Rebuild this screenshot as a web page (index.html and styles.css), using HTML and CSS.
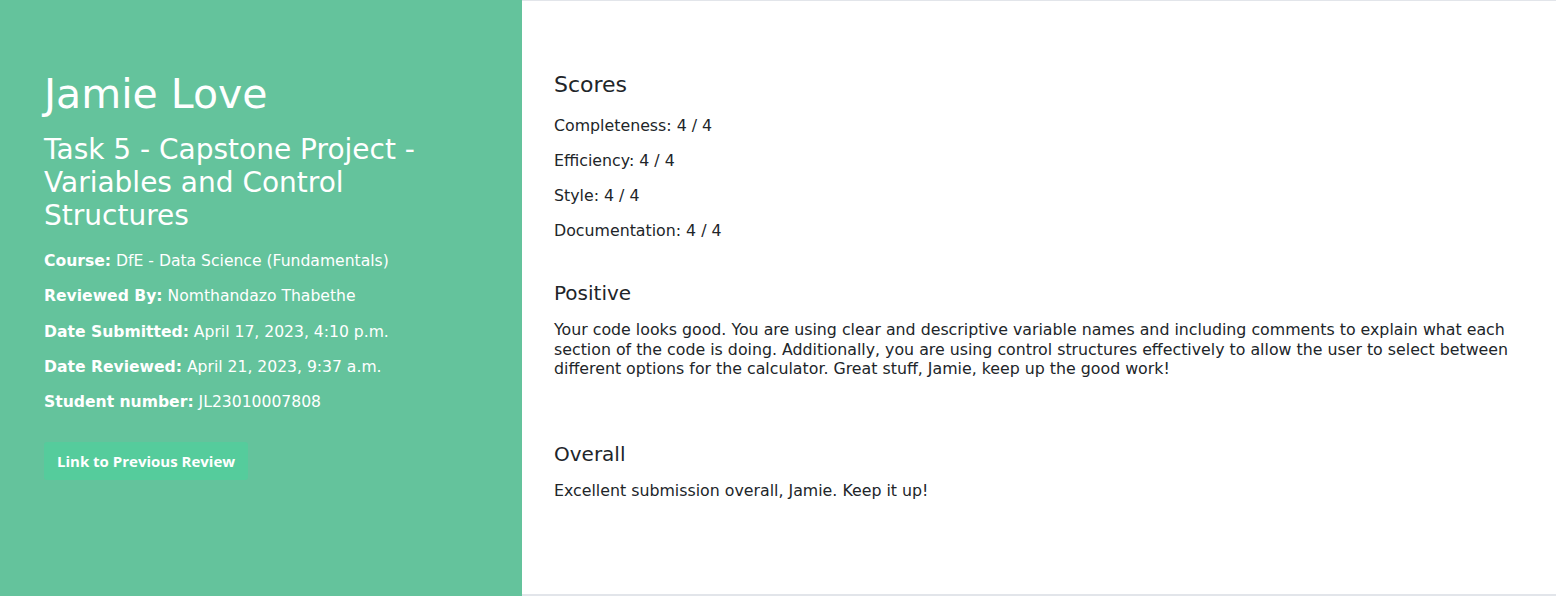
FILE: index.html
```html
<!DOCTYPE html>
<html lang="en">
<head>
<meta charset="utf-8">
<title>Review - Jamie Love</title>
<link rel="stylesheet" href="styles.css">
</head>
<body>
<div class="page">
  <aside class="side">
    <h1 class="name">Jamie Love</h1>
    <h2 class="task">Task 5 - Capstone Project - Variables and Control Structures</h2>
    <p class="meta"><strong>Course:</strong> DfE - Data Science (Fundamentals)</p>
    <p class="meta"><strong>Reviewed By:</strong> Nomthandazo Thabethe</p>
    <p class="meta"><strong>Date Submitted:</strong> April 17, 2023, 4:10 p.m.</p>
    <p class="meta"><strong>Date Reviewed:</strong> April 21, 2023, 9:37 a.m.</p>
    <p class="meta"><strong>Student number:</strong> JL23010007808</p>
    <a class="btn" href="#">Link to Previous Review</a>
  </aside>
  <main class="review">
    <section class="block scores">
      <h3 class="block-title big">Scores</h3>
      <p class="score">Completeness: 4 / 4</p>
      <p class="score">Efficiency: 4 / 4</p>
      <p class="score">Style: 4 / 4</p>
      <p class="score">Documentation: 4 / 4</p>
    </section>
    <section class="block positive">
      <h3 class="block-title">Positive</h3>
      <p class="text">Your code looks good. You are using clear and descriptive variable names and including comments to explain what each section of the code is doing. Additionally, you are using control structures effectively to allow the user to select between different options for the calculator. Great stuff, Jamie, keep up the good work!</p>
    </section>
    <section class="block overall">
      <h3 class="block-title">Overall</h3>
      <p class="text">Excellent submission overall, Jamie. Keep it up!</p>
    </section>
  </main>
</div>
</body>
</html>
```
FILE: styles.css
```css
* { box-sizing: border-box; }
html, body { margin: 0; padding: 0; }
body {
  font-family: "DejaVu Sans", "Noto Sans", sans-serif;
  background: #ffffff;
  color: #212529;
}
.page {
  display: flex;
  width: 1556px;
  height: 596px;
}
.side {
  width: 522px;
  flex: none;
  background: #64c39c;
  color: #ffffff;
  padding: 70px 44px 0 44px;
}
.name {
  font-weight: 400;
  font-size: 41px;
  line-height: 49px;
  margin: 0 0 14px 0;
}
.task {
  font-weight: 400;
  font-size: 28px;
  line-height: 33px;
  margin: 0 0 20px 0;
}
.meta {
  font-size: 15.6px;
  line-height: 19px;
  margin: 0 0 16.25px 0;
}
.meta strong { font-weight: 700; }
.btn {
  display: inline-block;
  margin-top: 14px;
  background: #55cc9c;
  color: #fff;
  text-decoration: none;
  font-family: "Open Sans", "Noto Sans", sans-serif;
  font-weight: 700;
  font-size: 15px;
  line-height: 38px;
  height: 38px;
  padding: 0 13px;
  border-radius: 3px;
}
.review {
  flex: 1;
  background: #fff;
  border-top: 1px solid #e2e5ea;
  border-bottom: 2px solid #e2e5ea;
  padding: 71px 32px 0 32px;
}
.block-title {
  font-weight: 500;
  font-size: 20px;
  line-height: 24px;
  margin: 0 0 15px 0;
  color: #212529;
}
.block-title.big {
  font-size: 22px;
  line-height: 26px;
  margin-bottom: 18px;
}
.score {
  font-size: 15.8px;
  line-height: 19px;
  margin: 0 0 16px 0;
}
.text {
  font-size: 15.8px;
  line-height: 19.5px;
  margin: 0;
}
.scores { margin-bottom: 41px; }
.positive { margin-bottom: 63px; }
```
